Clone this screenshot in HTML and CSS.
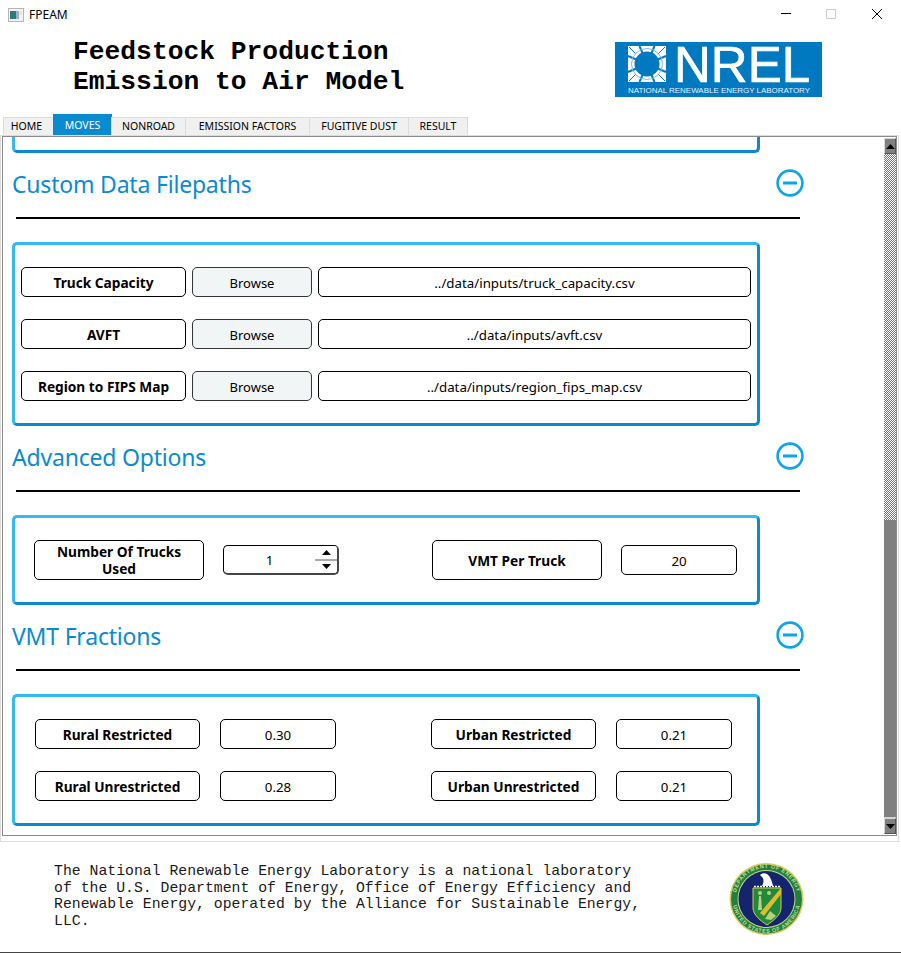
FILE: index.html
```html
<!DOCTYPE html>
<html lang="en">
<head>
<meta charset="utf-8">
<title>FPEAM</title>
<link rel="stylesheet" href="styles.css">
</head>
<body>
<div class="window">
  <div class="titlebar">
    <svg class="app-icon" width="16" height="14" viewBox="0 0 16 14"><rect x="0.5" y="0.5" width="15" height="13" fill="#f2f2f2" stroke="#b5b5b5"/><rect x="2" y="3" width="6" height="8" fill="#2f7a78"/><rect x="8" y="3" width="3" height="8" fill="#9ab4c4"/><rect x="11" y="3" width="3" height="4" fill="#dfe8ea"/></svg>
    <span class="app-title">FPEAM</span>
    <div class="win-controls">
      <svg width="10" height="10" viewBox="0 0 10 10"><path d="M0 4.500H10" stroke="#000" stroke-width="1"/></svg>
      <svg width="10" height="10" viewBox="0 0 10 10"><rect x="0.5" y="0.5" width="9" height="9" fill="none" stroke="#ccc"/></svg>
      <svg class="win-close" width="10" height="10" viewBox="0 0 10 10"><path d="M0 0L10 10M10 0L0 10" stroke="#000" stroke-width="1"/></svg>
    </div>
  </div>

  <header class="app-header">
    <h1 class="app-heading">Feedstock Production<br>Emission to Air Model</h1>
    <svg class="nrel-logo" width="207" height="55" viewBox="0 0 207 55">
      <rect width="207" height="55" fill="#0079c1"/>
      <rect x="13" y="4" width="38" height="36" fill="#fff"/>
      <g stroke="#0079c1" fill="none">
        <path stroke-width="2" d="M32 22L24.500 4M32 22L39.500 4M32 22L24.500 40M32 22L39.500 40M32 22L13 14M32 22L13 30M32 22L51 14M32 22L51 30"/>
        <path stroke-width="1" d="M14 5L21 12M50 5L43 12M14 39L21 32M50 39L43 32"/>
        <circle cx="32" cy="22" r="15.500" stroke-width="1" stroke="#7fbce0"/>
      </g>
      <circle cx="32" cy="22" r="12.500" fill="#0079c1"/>
      <text class="nrel-mark" x="59" y="40" textLength="136" lengthAdjust="spacingAndGlyphs">NREL</text>
      <text class="nrel-sub" x="13" y="51" textLength="182" lengthAdjust="spacingAndGlyphs">NATIONAL RENEWABLE ENERGY LABORATORY</text>
    </svg>
  </header>

  <nav class="tabs">
    <span class="tab">HOME</span>
    <span class="tab tab-active">MOVES</span>
    <span class="tab">NONROAD</span>
    <span class="tab">EMISSION FACTORS</span>
    <span class="tab">FUGITIVE DUST</span>
    <span class="tab">RESULT</span>
  </nav>

  <div class="pane-frame">
  <main class="pane">
    <div class="scroll-content">
      <div class="card card-clipped"></div>

      <section class="section">
        <div class="section-head">
          <h2 class="section-title">Custom Data Filepaths</h2>
          <svg class="collapse" width="28" height="28" viewBox="0 0 28 28"><circle cx="14" cy="14" r="12.4" fill="none" stroke="#0ea5e4" stroke-width="2.6"/><path d="M7 14H21" stroke="#0ea5e4" stroke-width="3"/></svg>
        </div>
        <hr class="rule">
        <div class="card card-files">
          <div class="file-row"><div class="box label">Truck Capacity</div><div class="box browse">Browse</div><div class="box field">../data/inputs/truck_capacity.csv</div></div>
          <div class="file-row"><div class="box label">AVFT</div><div class="box browse">Browse</div><div class="box field">../data/inputs/avft.csv</div></div>
          <div class="file-row"><div class="box label">Region to FIPS Map</div><div class="box browse">Browse</div><div class="box field">../data/inputs/region_fips_map.csv</div></div>
        </div>
      </section>

      <section class="section">
        <div class="section-head">
          <h2 class="section-title">Advanced Options</h2>
          <svg class="collapse" width="28" height="28" viewBox="0 0 28 28"><circle cx="14" cy="14" r="12.4" fill="none" stroke="#0ea5e4" stroke-width="2.6"/><path d="M7 14H21" stroke="#0ea5e4" stroke-width="3"/></svg>
        </div>
        <hr class="rule">
        <div class="card card-advanced">
          <div class="box label label-tall">Number Of Trucks Used</div>
          <div class="box field spin">
            <span class="spin-value">1</span>
            <span class="spin-buttons">
              <span class="spin-btn"><svg width="9" height="5" viewBox="0 0 9 5"><path d="M4.5 0L9 5H0Z"/></svg></span>
              <span class="spin-btn"><svg width="9" height="5" viewBox="0 0 9 5"><path d="M0 0H9L4.5 5Z"/></svg></span>
            </span>
          </div>
          <div class="box label label-tall label-vmt">VMT Per Truck</div>
          <div class="box field">20</div>
        </div>
      </section>

      <section class="section">
        <div class="section-head">
          <h2 class="section-title">VMT Fractions</h2>
          <svg class="collapse" width="28" height="28" viewBox="0 0 28 28"><circle cx="14" cy="14" r="12.4" fill="none" stroke="#0ea5e4" stroke-width="2.6"/><path d="M7 14H21" stroke="#0ea5e4" stroke-width="3"/></svg>
        </div>
        <hr class="rule">
        <div class="card card-vmt">
          <div class="box label">Rural Restricted</div><div class="box field">0.30</div>
          <div class="box label label-right">Urban Restricted</div><div class="box field">0.21</div>
          <div class="box label">Rural Unrestricted</div><div class="box field">0.28</div>
          <div class="box label label-right">Urban Unrestricted</div><div class="box field">0.21</div>
        </div>
      </section>
    </div>

    <div class="scrollbar">
      <span class="sb-btn"><svg width="9" height="5" viewBox="0 0 9 5"><path d="M4.5 0L9 5H0Z"/></svg></span>
      <span class="sb-track"></span>
      <span class="sb-thumb"></span>
      <span class="sb-btn"><svg width="9" height="5" viewBox="0 0 9 5"><path d="M0 0H9L4.5 5Z"/></svg></span>
    </div>
  </main>
  </div>

  <footer class="app-footer">
    <p class="footer-text">The National Renewable Energy Laboratory is a national laboratory<br>of the U.S. Department of Energy, Office of Energy Efficiency and<br>Renewable Energy, operated by the Alliance for Sustainable Energy,<br>LLC.</p>
    <svg class="seal" width="75" height="72" viewBox="0 0 75 72">
      <defs>
        <path id="seal-top" d="M6.500 36A31 31 0 0 1 68.500 36"/>
        <path id="seal-bottom" d="M3.500 36A34 34 0 0 0 71.500 36"/>
      </defs>
      <ellipse cx="37.500" cy="36" rx="37" ry="36" fill="#d9cc5c"/>
      <ellipse cx="37.500" cy="36" rx="35.500" ry="34.500" fill="#1f8040"/>
      <text class="seal-text"><textPath href="#seal-top" startOffset="50%" text-anchor="middle">DEPARTMENT OF ENERGY</textPath></text>
      <text class="seal-text"><textPath href="#seal-bottom" startOffset="50%" text-anchor="middle">UNITED STATES OF AMERICA</textPath></text>
      <circle cx="37.500" cy="36" r="29" fill="#c7d67f"/>
      <circle cx="37.500" cy="36" r="28" fill="#14246e"/>
      <path d="M24 25H52V45C52 52 44 58 38 62C32 58 24 52 24 45Z" fill="#1f8a3e" stroke="#d9c94a" stroke-width="1"/>
      <path d="M52 25V31L35 53L31 50Z" fill="#e2bb2c"/>
      <path d="M31 12C33 10 36 10 38 11C41 13 43 18 44 23H33C35 19 35 16 33 14Z" fill="#fff"/>
      <path d="M25 23.500H51" stroke="#fff" stroke-width="1.500" stroke-dasharray="2 1"/>
      <path d="M29 47L30 33H32L33 47Z" fill="#b9cf7a"/>
      <circle cx="31" cy="30" r="2" fill="#b9cf7a"/>
      <circle cx="40" cy="30" r="2" fill="#b9cf7a"/>
      <path d="M36 56L41 48L47 53L42 57Z" fill="#b9cf7a"/>
    </svg>
  </footer>
</div>
</body>
</html>
```
FILE: styles.css
```css
* { box-sizing: border-box; }
html, body { margin: 0; padding: 0; background: #fff; }
.window {
  width: 901px;
  height: 953px;
  display: flex;
  flex-direction: column;
  background: #fff;
  border-bottom: 1px solid #444;
  overflow: hidden;
  font-family: "DejaVu Sans", Verdana, sans-serif;
  color: #000;
}
.titlebar {
  height: 30px;
  flex: none;
  display: flex;
  align-items: center;
  padding-left: 8px;
  font-family: "Noto Sans", sans-serif;
  font-size: 12px;
}
.app-icon { margin-right: 5px; }
.app-title { margin-top: -1px; }
.win-controls {
  margin-left: auto;
  display: flex;
  align-items: center;
  gap: 35px;
  padding-right: 19px;
  padding-bottom: 2px;
}
.win-close { margin-left: 1px; }
.app-header {
  height: 86px;
  flex: none;
  display: flex;
  align-items: flex-start;
  justify-content: space-between;
  padding: 7px 79px 0 73px;
}
.app-heading {
  margin: 0;
  font-family: "Liberation Mono", monospace;
  font-size: 26.3px;
  line-height: 30px;
  font-weight: 700;
}
.nrel-logo { display: block; margin-top: 5px; }
.nrel-mark { font-family: "Liberation Sans", sans-serif; font-size: 50px; fill: #fff; stroke: #fff; stroke-width: 0.7px; }
.nrel-sub { font-family: "Liberation Sans", sans-serif; font-size: 8px; fill: #e4f1fa; }
.tabs {
  height: 19px;
  flex: none;
  display: flex;
  align-items: flex-end;
  padding-left: 3px;
  font-family: "Noto Sans", sans-serif;
  font-size: 10.5px;
}
.tab {
  height: 18px;
  padding: 0 0 2px;
  display: flex;
  align-items: center;
  justify-content: center;
  background: #f0f0f0;
  border: 1px solid #dcdcdc;
  border-bottom: none;
  margin-left: -1px;
}
.tab:nth-child(1) { width: 51px; margin-left: 0; padding-right: 4px; }
.tab:nth-child(3) { width: 75px; }
.tab:nth-child(4) { width: 125px; }
.tab:nth-child(5) { width: 100px; }
.tab:nth-child(6) { width: 60px; }
.tab-active {
  width: 59px;
  height: 21px;
  padding-bottom: 1px;
  background: #0a8bd0;
  border-color: #0a8bd0;
  color: #fff;
}
.pane-frame {
  height: 707px;
  flex: none;
  margin-right: 2px;
  border: 1px solid #dcdcdc;
  padding: 0 1px 5px 1px;
}
.pane {
  height: 100%;
  display: flex;
  border: 1px solid #8a8a8a;
  overflow: hidden;
}
.scroll-content {
  flex: 1;
  min-width: 0;
  padding-left: 9px;
  overflow: hidden;
}
.card {
  width: 748px;
  border: 3px solid;
  border-color: #33b8f8 #0a8bd0 #0a8bd0 #33b8f8;
  border-radius: 5px;
}
.card-clipped {
  height: 16px;
  border-top: none;
  border-top-left-radius: 0;
  border-top-right-radius: 0;
}
.section-head {
  height: 50px;
  display: flex;
  align-items: center;
  justify-content: space-between;
  padding-top: 11px;
  width: 792px;
}
.section-title {
  margin: 0;
  font-family: "Noto Sans", sans-serif;
  font-size: 23px;
  letter-spacing: -0.2px;
  font-weight: 400;
  color: #0a8bd0;
}
.collapse { display: block; margin-top: -2px; }
.rule {
  width: 784px;
  height: 2px;
  margin: 14px 0 23px 4px;
  border: none;
  background: #000;
}
.box {
  height: 30px;
  display: flex;
  align-items: center;
  justify-content: center;
  text-align: center;
  border: 1px solid #000;
  border-radius: 5px;
  background: #fff;
  padding-top: 1px;
  font-family: "Noto Sans", sans-serif;
  font-size: 13px;
}
.field { font-size: 13.3px; }
.label { font-weight: 700; font-size: 13.7px; }
.browse { background: #f2f5f6; border-color: #333; }
.card-files {
  height: 184px;
  padding: 22px 6px 0;
  display: flex;
  flex-direction: column;
  gap: 22px;
}
.file-row {
  display: grid;
  grid-template-columns: 165px 120px 433px;
  gap: 6px;
}
.card-advanced {
  height: 90px;
  display: grid;
  grid-template-columns: 170px 116px 244px 116px;
  align-items: center;
  column-gap: 19px;
  padding: 0 19px;
}
.card-advanced .label-vmt { margin-left: 74px; width: 170px; }
.label-tall { height: 40px; line-height: 17px; padding: 0 16px; }
.spin { padding: 0; justify-content: flex-start; overflow: hidden; border-right: 2px solid #444; border-bottom: 2px solid #444; }
.spin-value { width: 92px; padding-top: 1px; text-align: center; }
.spin-buttons { display: flex; flex-direction: column; flex: none; width: 22px; height: 100%; }
.spin-btn { flex: 1; display: flex; align-items: center; justify-content: center; background: #fff; }
.spin-btn:first-child { border-bottom: 2px solid #aaa; }
.card-vmt {
  height: 132px;
  display: grid;
  grid-template-columns: 165px 116px 240px 116px;
  column-gap: 20px;
  row-gap: 22px;
  padding: 22px 20px 0;
  align-content: start;
}
.card-vmt .label-right { margin-left: 75px; width: 165px; }
.scrollbar {
  width: 12px;
  flex: none;
  margin: 1px 0;
  display: flex;
  flex-direction: column;
}
.sb-btn {
  height: 16px;
  flex: none;
  display: flex;
  align-items: center;
  justify-content: center;
  background: #808080;
  border: 1px solid;
  border-color: #d8d8d8 #555 #555 #d8d8d8;
}
.sb-track {
  height: 366px;
  flex: none;
  background-color: #fff;
  background-image: conic-gradient(#777 25%, #fff 0 50%, #777 0 75%, #fff 0);
  background-size: 2px 2px;
}
.sb-thumb { flex: 1; background: #808080; border-bottom: 1px solid #d0d0d0; }
.app-footer {
  flex: 1;
  display: flex;
  align-items: flex-start;
  padding: 21px 0 0 54px;
}
.footer-text {
  margin: 0;
  width: 675px;
  font-family: "Liberation Mono", monospace;
  font-size: 14.8px;
  line-height: 16.6px;
  color: #1a1a1a;
  flex: none;
}
.seal { display: block; }
.seal-text { font-family: "Liberation Sans", sans-serif; font-size: 5.5px; font-weight: 700; fill: #c9dc8c; letter-spacing: 0.6px; }
```
